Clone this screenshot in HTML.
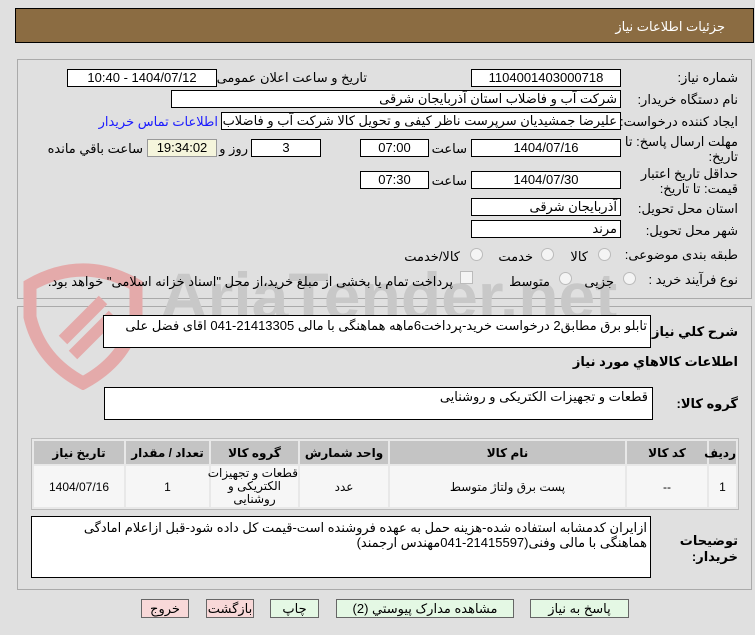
<!DOCTYPE html>
<html><head><meta charset="utf-8"><style>
body{margin:0;width:755px;height:635px;background:#e0e0e0;font-family:"Liberation Sans","DejaVu Sans",sans-serif;font-size:13px;color:#000;position:relative;overflow:hidden}
.a{position:absolute}
.box{position:absolute;background:#fff;border:1px solid #000;box-sizing:border-box;height:18px;line-height:16px;white-space:nowrap;overflow:hidden;direction:rtl}
.c{text-align:center}
.r{text-align:right;padding-right:3px}
.l{position:absolute;white-space:nowrap;direction:rtl}
.rad{position:absolute;width:11px;height:11px;border-radius:50%;border:1px solid #bbb;background:#f4f4f4}
.btn{position:absolute;top:599px;height:19px;border:1px solid #666;box-sizing:border-box;text-align:center;line-height:17px;font-size:13px;direction:rtl;white-space:nowrap}
table{border-collapse:separate;border-spacing:2px;table-layout:fixed}
td{text-align:center;padding:0}
</style></head><body>
<div class="a" style="left:15px;top:8px;width:739px;height:35px;background:#8b6c42;border:1px solid #000;box-sizing:border-box"></div>
<div class="l" style="right:30px;top:19px;color:#fff;font-size:13px">جزئیات اطلاعات نیاز</div>
<div class="a" style="left:17px;top:59px;width:735px;height:240px;border:1px solid #aaa;box-sizing:border-box"></div>
<div class="a" style="left:17px;top:306px;width:735px;height:284px;border:1px solid #aaa;box-sizing:border-box"></div>
<!-- watermark -->
<svg class="a" style="left:18px;top:255px" width="140" height="135" viewBox="0 0 140 135"><path d="M12 30 Q65 0 118 30 L118 62 Q108 105 65 128 Q22 105 12 62 Z" fill="none" stroke="#e4aaaa" stroke-width="13"/><path d="M45 85 L85 45 M55 100 L95 60" stroke="#e4aaaa" stroke-width="12"/></svg>
<div class="a" style="left:160px;top:258px;font-size:66px;font-weight:bold;color:#c8c8c8;white-space:nowrap">AriaTender.net</div>

<div class="l" style="right:17px;top:70px">شماره نیاز:</div>
<div class="box c" style="left:471px;top:69px;width:150px">1104001403000718</div>
<div class="l" style="right:388px;top:70px">تاریخ و ساعت اعلان عمومی:</div>
<div class="box c" style="left:67px;top:69px;width:150px">1404/07/12 - 10:40</div>

<div class="l" style="right:17px;top:92px">نام دستگاه خریدار:</div>
<div class="box r" style="left:171px;top:90px;width:450px">شرکت آب و فاضلاب استان آذربایجان شرقی</div>

<div class="l" style="right:17px;top:114px">ایجاد کننده درخواست:</div>
<div class="box r" style="left:221px;top:112px;width:400px">علیرضا جمشیدیان سرپرست ناظر کیفی و تحویل کالا شرکت آب و فاضلاب استان</div>
<div class="l" style="right:537px;top:114px;color:#1a1aff">اطلاعات تماس خریدار</div>

<div class="l" style="right:17px;top:134px;line-height:15px">مهلت ارسال پاسخ: تا<br>تاریخ:</div>
<div class="box c" style="left:471px;top:139px;width:150px">1404/07/16</div>
<div class="l" style="right:288px;top:141px">ساعت</div>
<div class="box c" style="left:360px;top:139px;width:69px">07:00</div>
<div class="box c" style="left:251px;top:139px;width:70px">3</div>
<div class="l" style="right:507px;top:141px">روز و</div>
<div class="box c" style="left:147px;top:139px;width:70px;background:#f5f5dc;border-color:#999">19:34:02</div>
<div class="l" style="right:612px;top:141px">ساعت باقي مانده</div>

<div class="l" style="right:17px;top:166px;line-height:15px">حداقل تاریخ اعتبار<br>قیمت: تا تاریخ:</div>
<div class="box c" style="left:471px;top:171px;width:150px">1404/07/30</div>
<div class="l" style="right:288px;top:173px">ساعت</div>
<div class="box c" style="left:360px;top:171px;width:69px">07:30</div>

<div class="l" style="right:17px;top:201px">استان محل تحویل:</div>
<div class="box r" style="left:471px;top:198px;width:150px">آذربایجان شرقی</div>
<div class="l" style="right:17px;top:223px">شهر محل تحویل:</div>
<div class="box r" style="left:471px;top:220px;width:150px">مرند</div>

<div class="l" style="right:17px;top:247px">طبقه بندی موضوعی:</div>
<div class="rad" style="left:598px;top:248px"></div><div class="l" style="right:167px;top:249px">کالا</div>
<div class="rad" style="left:541px;top:248px"></div><div class="l" style="right:222px;top:249px">خدمت</div>
<div class="rad" style="left:470px;top:248px"></div><div class="l" style="right:295px;top:249px">کالا/خدمت</div>

<div class="l" style="right:17px;top:272px">نوع فرآیند خرید :</div>
<div class="rad" style="left:623px;top:272px"></div><div class="l" style="right:141px;top:274px">جزیی</div>
<div class="rad" style="left:559px;top:272px"></div><div class="l" style="right:205px;top:274px">متوسط</div>
<div class="a" style="left:460px;top:271px;width:11px;height:11px;border:1px solid #bbb;background:#f4f4f4"></div>
<div class="l" style="right:302px;top:274px">پرداخت تمام یا بخشی از مبلغ خرید،از محل "اسناد خزانه اسلامی" خواهد بود.</div>

<div class="l" style="right:17px;top:324px;font-weight:bold">شرح کلي نیاز:</div>
<div class="box" style="left:103px;top:315px;width:548px;height:33px;text-align:right;padding-right:3px;line-height:20px">تابلو برق مطابق2 درخواست خرید-پرداخت6ماهه هماهنگی با مالی 21413305-041 اقای فضل علی</div>
<div class="l" style="right:17px;top:354px;font-weight:bold">اطلاعات کالاهاي مورد نیاز</div>
<div class="l" style="right:17px;top:396px;font-weight:bold">گروه کالا:</div>
<div class="box" style="left:104px;top:387px;width:549px;height:33px;text-align:right;padding-right:4px;line-height:18px">قطعات و تجهیزات الکتریکی و روشنایی</div>

<div class="a" style="left:31px;top:438px;width:708px;height:72px;border:1px solid #bbb;box-sizing:border-box;background:#e8e8e8;overflow:hidden">
<table style="width:100%;direction:rtl;font-size:12px">
<tr style="background:#c4c4c4;height:23px;font-weight:bold">
<td style="width:27px">ردیف</td><td style="width:80px">کد کالا</td><td style="width:235px">نام کالا</td><td style="width:88px">واحد شمارش</td><td style="width:87px">گروه کالا</td><td style="width:83px">تعداد / مقدار</td><td>تاریخ نیاز</td></tr>
<tr style="background:#f6f6f6;height:41px">
<td>1</td><td>--</td><td>پست برق ولتاژ متوسط</td><td>عدد</td><td style="line-height:13px;font-size:12px;white-space:nowrap">قطعات و تجهیزات<br>الکتریکی و<br>روشنایی</td><td>1</td><td>1404/07/16</td></tr>
</table></div>

<div class="l" style="right:17px;top:533px;font-weight:bold;line-height:16px">توضیحات<br>خریدار:</div>
<div class="box" style="left:31px;top:516px;width:620px;height:62px;white-space:normal;text-align:right;padding:3px 3px 0 2px;line-height:15px">ازایران کدمشابه استفاده شده-هزینه حمل به عهده فروشنده است-قیمت کل داده شود-قبل ازاعلام امادگی هماهنگی با مالی وفنی(21415597-041مهندس ارجمند)</div>

<div class="btn" style="left:530px;width:99px;background:#e4f8e4">پاسخ به نیاز</div>
<div class="btn" style="left:336px;width:178px;background:#e4f8e4">مشاهده مدارک پیوستي (2)</div>
<div class="btn" style="left:270px;width:49px;background:#e4f8e4">چاپ</div>
<div class="btn" style="left:206px;width:48px;background:#f8d8d8">بازگشت</div>
<div class="btn" style="left:141px;width:48px;background:#f8d8d8">خروج</div>
</body></html>
